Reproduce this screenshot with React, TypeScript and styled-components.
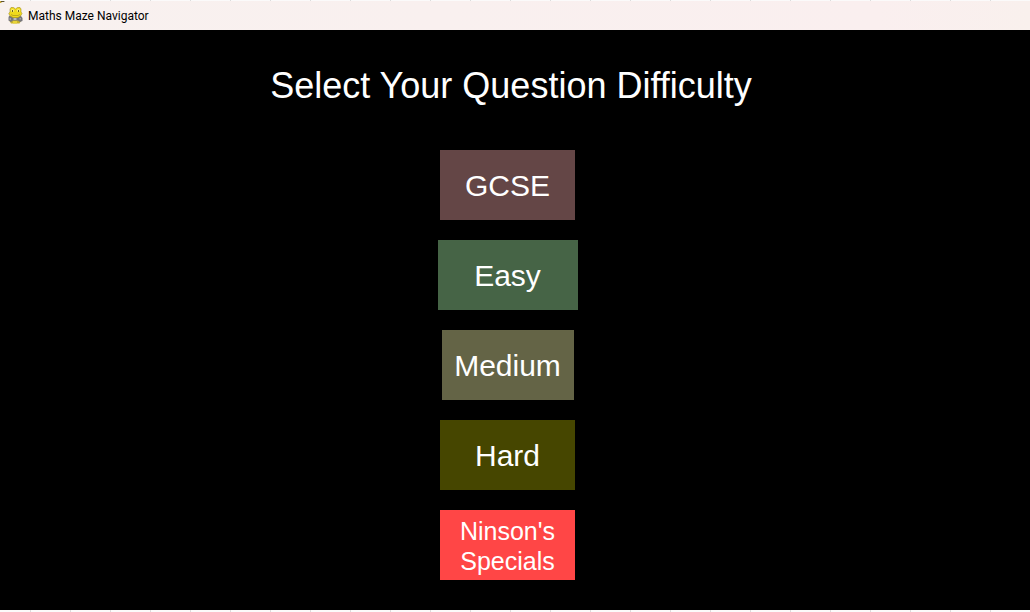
import React from "react";
import styled, { createGlobalStyle } from "styled-components";

const GlobalStyle = createGlobalStyle`
  * { box-sizing: border-box; }
  body { margin: 0; background: #000; }
`;

const Window = styled.div`
  display: flex;
  flex-direction: column;
  min-height: 100vh;
  background: #000;
  color: #fff;
  font-family: Arial, "Liberation Sans", sans-serif;
`;

const GridEdge = styled.div<{ $size: number }>`
  height: ${(p) => p.$size}px;
  background: repeating-linear-gradient(90deg, #fbfafa 0 30px, #dcdcdc 30px 31px, #fbfafa 31px 40px);
`;

const TitleBar = styled.header`
  position: relative;
  display: flex;
  align-items: center;
  gap: 5px;
  height: 29px;
  padding: 0 8px;
  background: linear-gradient(90deg, #f8f1ef, #faefef 85%, #f9f0ed);
  color: #000;
  font: 12px/16px "Segoe UI", Roboto, "Open Sans", sans-serif;
`;

const CornerMark = styled.svg`
  position: absolute;
  top: 0;
  left: 0;
`;

const Screen = styled.main`
  flex: 1;
  display: flex;
  flex-direction: column;
  align-items: center;
  padding: 35px 15px 30px 0;
`;

const Heading = styled.h1`
  margin: 0 0 44px;
  padding-left: 7px;
  font-size: 36px;
  line-height: 41px;
  font-weight: 400;
  text-align: center;
`;

const Choices = styled.div`
  display: flex;
  flex-direction: column;
  align-items: center;
  gap: 20px;
`;

const Choice = styled.button<{ $fill: string; $width: number; $small?: boolean }>`
  width: ${(p) => p.$width}px;
  height: 70px;
  padding: 2px 12px 0;
  border: 0;
  background: ${(p) => p.$fill};
  color: #fff;
  font-family: inherit;
  font-size: ${(p) => (p.$small ? 25 : 30)}px;
  line-height: 30px;
  cursor: pointer;
`;

const SnakeIcon = () => (
  <svg width="15" height="17" viewBox="0 0 15 17" aria-hidden="true">
    <path d="M4 9 H11 V13 L13 14 L11.500 16.500 H3 L1.500 14 L4 13 Z" fill="#c9b32c" />
    <path d="M1 9 H4 L5.500 11 H9.500 L10.500 9 H13 L14.500 11 V14 L12 15 L10 13.500 H5 L3 15 L.5 13.500 V10.500 Z" fill="#77777b" />
    <path d="M5.500 11 H8.500 V13 H5.500 Z" fill="#b9b9bd" />
    <path d="M1.500 11 H3 V13 H1.500 Z M11.500 11 H13 V12.500 H11.500 Z" fill="#a3a3a6" />
    <path d="M5 14 H9 V16.500 H5 Z" fill="#e9d536" />
    <path d="M3 .5 H5.500 L7.500 2 L9.500 .5 H12 L13 2 V5 L14 6.500 L12.500 9 L10 10.500 H5 L2 9 L.8 6.500 L2 5 V2 Z" fill="#f0da1c" stroke="#a18d24" strokeWidth=".6" />
    <circle cx="4.500" cy="3.500" r="1.600" fill="#f8ee78" />
    <circle cx="10.500" cy="3.500" r="1.600" fill="#f8ee78" />
    <rect x="4" y="3" width="1" height="2" fill="#6d621d" />
    <rect x="10" y="3" width="1" height="2" fill="#6d621d" />
    <path d="M3 7.500 L5 8.500 H10 L12 7.500" fill="none" stroke="#b49d1b" strokeWidth=".8" />
  </svg>
);

const levels = [
  { name: "GCSE", fill: "#644646", width: 135 },
  { name: "Easy", fill: "#466446", width: 140 },
  { name: "Medium", fill: "#646446", width: 132 },
  { name: "Hard", fill: "#464600", width: 135 },
  { name: "Ninson's Specials", fill: "#ff4646", width: 135, small: true },
];

export default function App() {
  return (
    <>
      <GlobalStyle />
      <Window>
        <GridEdge $size={1} />
        <TitleBar>
          <CornerMark width="6" height="3" viewBox="0 0 6 3" aria-hidden="true">
            <path d="M0 0 H3 L2 1 L1 2 H0 Z" fill="#c4a632" />
            <path d="M1 0 H4 V1 H1 Z" fill="#5e5230" />
            <path d="M4 0 H5 V1 H4 Z" fill="#b5aea6" />
          </CornerMark>
          <SnakeIcon />
          <span>Maths Maze Navigator</span>
        </TitleBar>
        <Screen>
          <Heading>Select Your Question Difficulty</Heading>
          <Choices>
            {levels.map((l) => (
              <Choice key={l.name} type="button" $fill={l.fill} $width={l.width} $small={l.small}>
                {l.name}
              </Choice>
            ))}
          </Choices>
        </Screen>
        <GridEdge $size={2} />
      </Window>
    </>
  );
}
